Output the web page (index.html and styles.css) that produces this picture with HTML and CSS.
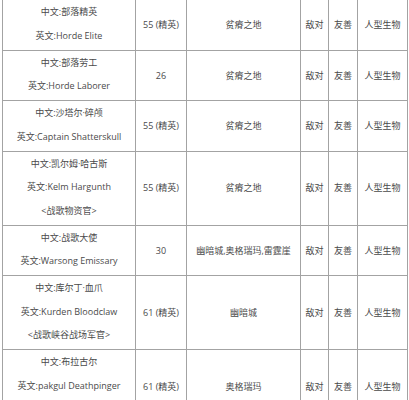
FILE: index.html
```html
<!DOCTYPE html>
<html lang="zh-CN">
<head>
<meta charset="utf-8">
<title>NPC 列表</title>
<link rel="stylesheet" href="styles.css">
</head>
<body>
<table class="npc">
  <colgroup>
    <col class="c-name">
    <col class="c-level">
    <col class="c-zone">
    <col class="c-rel">
    <col class="c-rel2">
    <col class="c-type">
  </colgroup>
  <tbody>
    <tr>
      <td class="name">中文:部落精英<br>英文:Horde Elite</td>
      <td>55 (精英)</td>
      <td>贫瘠之地</td>
      <td>敌对</td>
      <td>友善</td>
      <td>人型生物</td>
    </tr>
    <tr>
      <td class="name">中文:部落劳工<br>英文:Horde Laborer</td>
      <td>26</td>
      <td>贫瘠之地</td>
      <td>敌对</td>
      <td>友善</td>
      <td>人型生物</td>
    </tr>
    <tr>
      <td class="name">中文:沙塔尔·碎颅<br>英文:Captain Shatterskull</td>
      <td>55 (精英)</td>
      <td>贫瘠之地</td>
      <td>敌对</td>
      <td>友善</td>
      <td>人型生物</td>
    </tr>
    <tr>
      <td class="name">中文:凯尔姆·哈古斯<br>英文:Kelm Hargunth<br>&lt;战歌物资官&gt;</td>
      <td>55 (精英)</td>
      <td>贫瘠之地</td>
      <td>敌对</td>
      <td>友善</td>
      <td>人型生物</td>
    </tr>
    <tr>
      <td class="name">中文:战歌大使<br>英文:Warsong Emissary</td>
      <td>30</td>
      <td>幽暗城,奥格瑞玛,雷霆崖</td>
      <td>敌对</td>
      <td>友善</td>
      <td>人型生物</td>
    </tr>
    <tr>
      <td class="name">中文:库尔丁·血爪<br>英文:Kurden Bloodclaw<br>&lt;战歌峡谷战场军官&gt;</td>
      <td>61 (精英)</td>
      <td>幽暗城</td>
      <td>敌对</td>
      <td>友善</td>
      <td>人型生物</td>
    </tr>
    <tr>
      <td class="name">中文:布拉古尔<br>英文:pakgul Deathpinger<br>&lt;战歌峡谷军需官&gt;</td>
      <td>61 (精英)</td>
      <td>奥格瑞玛</td>
      <td>敌对</td>
      <td>友善</td>
      <td>人型生物</td>
    </tr>
  </tbody>
</table>
</body>
</html>
```
FILE: styles.css
```css
html, body {
  margin: 0;
  padding: 0;
  background: #ffffff;
}

body {
  font-family: "Open Sans", "Noto Sans CJK SC", sans-serif;
  font-size: 9px;
  color: #4a4a4a;
}

.npc {
  border-collapse: collapse;
  table-layout: fixed;
  width: 406px;
  margin: -1px 0 0 2px;
}

.c-name { width: 133px; }
.c-level { width: 51px; }
.c-zone { width: 114px; }
.c-rel { width: 28px; }
.c-rel2 { width: 29px; }
.c-type { width: 50px; }

.npc td {
  border: 1px solid #a3a3a3;
  text-align: center;
  vertical-align: middle;
  padding: 0;
  line-height: 23.5px;
  white-space: nowrap;
}

.npc td.name {
  padding: 0 0 2.5px;
}
```
